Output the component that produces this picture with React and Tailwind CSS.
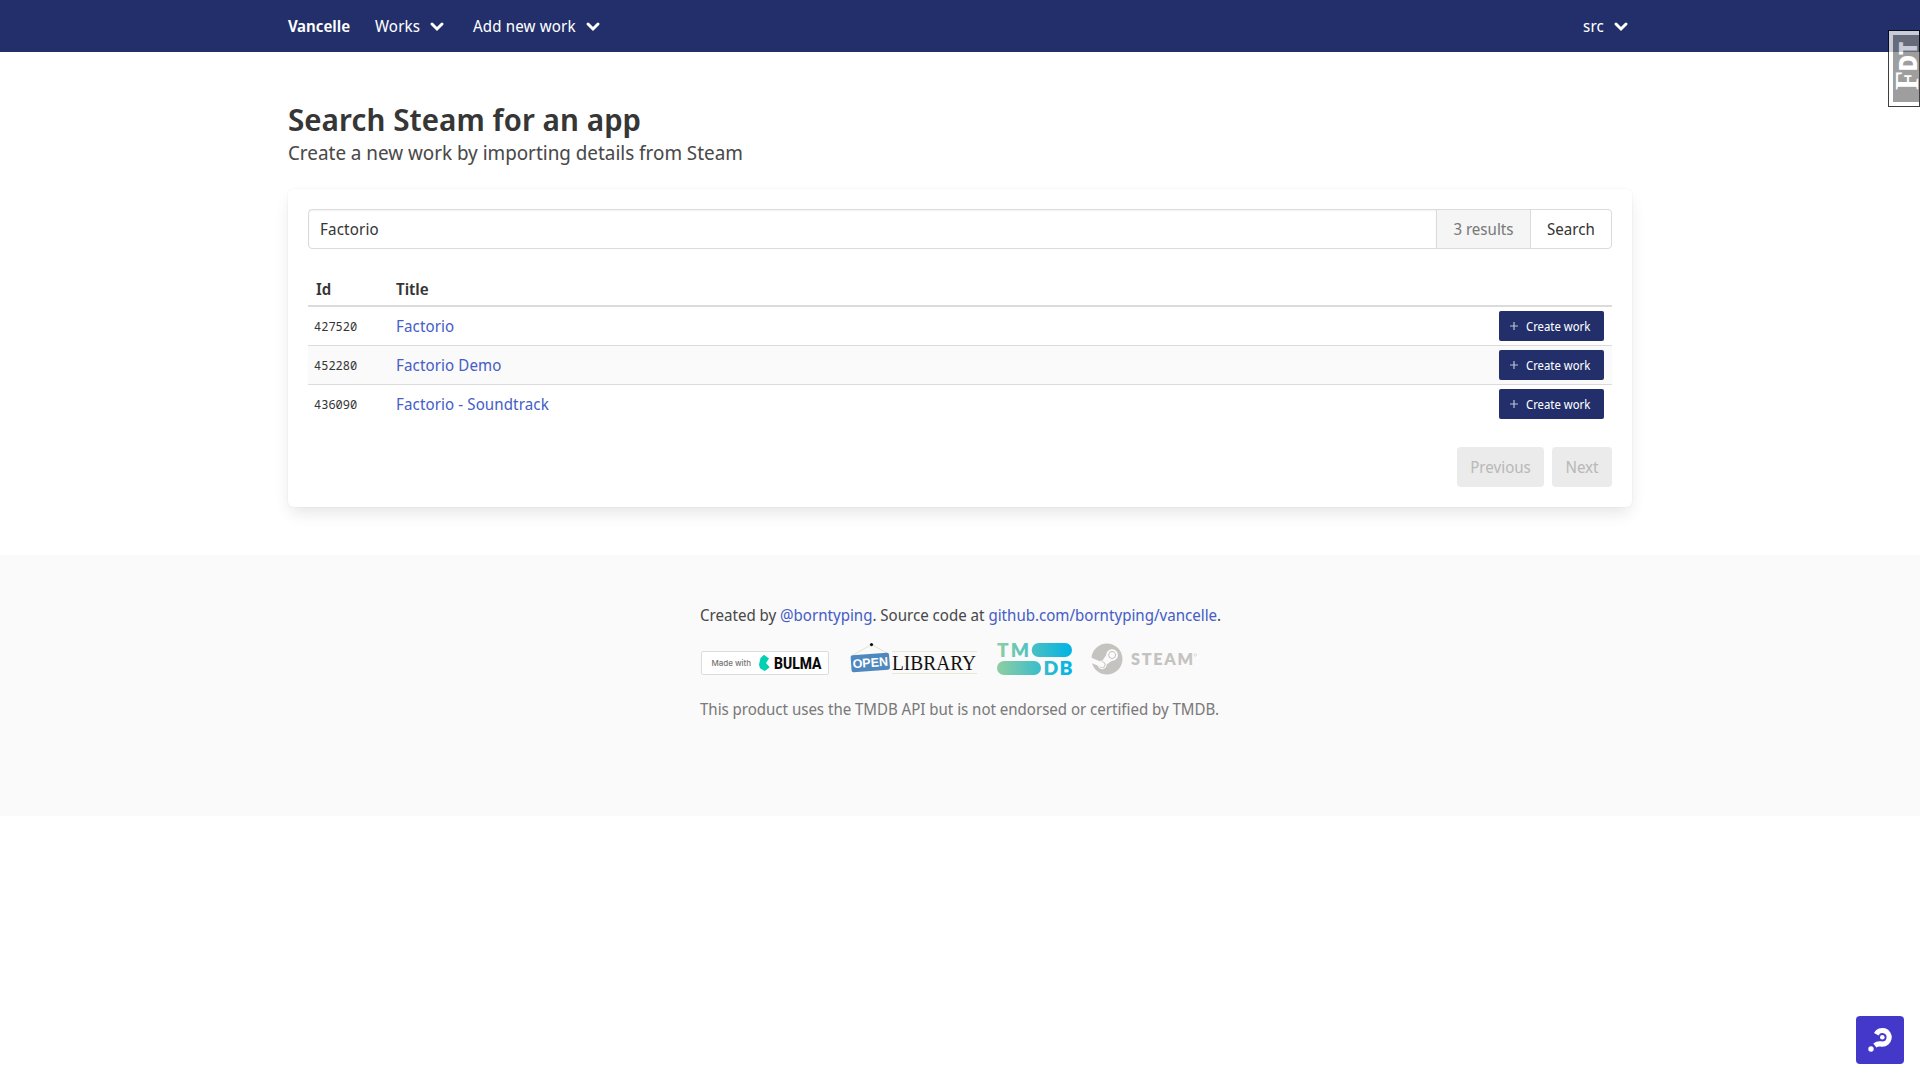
import { FaSteam } from "react-icons/fa";

const rows = [
  { id: "427520", title: "Factorio" },
  { id: "452280", title: "Factorio Demo" },
  { id: "436090", title: "Factorio - Soundtrack" },
];

function NavLink({ children }) {
  return (
    <a className="flex h-full items-center pr-[14px] pl-3 whitespace-nowrap">
      <span className="tracking-[0.01em]">{children}</span>
      <svg className="ml-[9px]" width="16" height="16" viewBox="0 0 16 16" fill="none">
        <path d="M3 6 8 11 13 6" stroke="#fff" strokeWidth="3" strokeLinecap="round" strokeLinejoin="miter" />
      </svg>
    </a>
  );
}

function Navbar() {
  return (
    <nav className="h-[52px] bg-[#222f6b] text-white">
      <div className="mx-auto flex h-full w-[1344px] items-center">
        <a className="w-[75px] font-semibold">Vancelle</a>
        <div className="h-full w-[98px]">
          <NavLink>Works</NavLink>
        </div>
        <NavLink>Add new work</NavLink>
        <div className="-mr-[11px] ml-auto h-full">
          <NavLink>src</NavLink>
        </div>
      </div>
    </nav>
  );
}

function SearchField() {
  return (
    <div className="flex h-10 rounded border border-[#dbdbdb] bg-white">
      <div className="flex flex-1 items-center pl-[11px] tracking-[0.01em] text-[#363636] shadow-[inset_0_1px_2px_rgba(10,10,10,0.05)]">
        Factorio
      </div>
      <div className="flex w-[95px] items-center justify-center border-x border-[#dbdbdb] bg-[#f5f5f5] text-[#7a7a7a]">
        3 results
      </div>
      <div className="flex w-[80px] items-center justify-center text-[#363636]">Search</div>
    </div>
  );
}

function CreateButton() {
  return (
    <button className="flex h-[30px] w-[105px] items-center rounded-[2px] bg-[#222f6b] pl-[10px] text-xs text-white">
      <svg className="opacity-70" width="10" height="10" viewBox="0 0 10 10">
        <path d="M5 1v8M1 5h8" stroke="#fff" strokeWidth="1.2" />
      </svg>
      <span className="mt-px ml-[7px]">Create work</span>
    </button>
  );
}

function Results() {
  return (
    <div className="mt-[18px] text-[#363636]">
      <div className="flex h-10 border-b-2 border-[#dbdbdb] leading-6 font-semibold">
        <div className="w-20 px-2 pt-[10px]">Id</div>
        <div className="pt-[10px] pl-2">Title</div>
      </div>
      {rows.map((r) => (
        <div
          key={r.id}
          className="flex h-[39px] items-center border-b border-[#dbdbdb] pr-2 last:h-[38px] last:border-b-0 nth-[3]:bg-[#fafafa]"
        >
          <div className="mt-px w-20 pl-[6px] font-['Noto_Sans_Mono','DejaVu_Sans_Mono',monospace] text-xs">{r.id}</div>
          <div className="flex-1 pl-2 tracking-[0.006em] text-[#485fc7]">{r.title}</div>
          <CreateButton />
        </div>
      ))}
    </div>
  );
}

function BulmaBadge() {
  return (
    <svg className="overflow-visible" width="130" height="32" viewBox="0 0 130 32">
      <rect x="1.5" y="8.5" width="127" height="23" rx="1.5" fill="#fff" stroke="#dcdcdc" />
      <text x="11.5" y="23" fontFamily="Inter, sans-serif" fontSize="8" fontWeight="500" fill="#757575" textLength="39.5">
        Made with
      </text>
      <path d="M59 21.5 60.5 15 64 11.8 69 15.5 66 20 69.7 24.2 64.8 28 60 25.3Z" fill="#00d1b2" />
      <text x="74" y="26" fontFamily="Roboto, sans-serif" fontSize="16.4" fontWeight="800" fill="#0a0a0a" textLength="47.5" lengthAdjust="spacingAndGlyphs">
        BULMA
      </text>
    </svg>
  );
}

function OpenLibraryLogo() {
  return (
    <svg className="overflow-visible" width="128" height="32" viewBox="0 0 128 32">
      <path d="M3 12 21.5 1.5 37 10" fill="none" stroke="#e3dfc9" strokeWidth="0.9" />
      <path d="M42 8.5h85M42 30.5h85" stroke="#e8e6d6" />
      <circle cx="21.5" cy="1.6" r="1.6" fill="#111" />
      <g transform="rotate(-4 20 19)">
        <rect x="1" y="11" width="38.5" height="17" rx="2" fill="#4f88be" />
        <text x="2.5" y="24" fontFamily="Liberation Sans, sans-serif" fontSize="12.5" fontWeight="700" fill="#fff" textLength="35.5" lengthAdjust="spacingAndGlyphs">
          OPEN
        </text>
      </g>
      <text x="42" y="26.5" fontFamily="Liberation Serif, serif" fontSize="21.5" fill="#111" textLength="84" lengthAdjust="spacingAndGlyphs">
        LIBRARY
      </text>
    </svg>
  );
}

function TmdbLogo() {
  return (
    <svg className="overflow-visible" width="75" height="32" viewBox="0 0 75 32">
      <defs>
        <linearGradient id="tmdb" gradientUnits="userSpaceOnUse" x1="0" y1="0" x2="75" y2="0">
          <stop offset="0" stopColor="#90cea1" />
          <stop offset="0.56" stopColor="#3cbec9" />
          <stop offset="1" stopColor="#00b3e5" />
        </linearGradient>
      </defs>
      <g fill="url(#tmdb)">
        <rect x="34.7" y="0" width="40.3" height="14" rx="7" />
        <rect x="0" y="18" width="44" height="14" rx="7" />
        <text x="0" y="14" fontFamily="Lato, sans-serif" fontSize="19" fontWeight="800" textLength="32">
          TM
        </text>
        <text x="46.5" y="32" fontFamily="Lato, sans-serif" fontSize="19.4" fontWeight="800" textLength="29">
          DB
        </text>
      </g>
    </svg>
  );
}

function SteamLogo() {
  return (
    <div className="flex h-8 items-center text-[#c5c3c0]">
      <FaSteam size={32} />
      <svg className="ml-2 overflow-visible" width="68" height="32" viewBox="0 0 68 32" fill="currentColor">
        <text x="0" y="22" fontFamily="Lato, sans-serif" fontSize="16.2" fontWeight="800" textLength="62">
          STEAM
        </text>
        <circle cx="64.3" cy="12" r="1.3" fill="none" stroke="currentColor" strokeWidth="0.5" />
      </svg>
    </div>
  );
}

function Footer() {
  return (
    <footer className="mt-12 flex h-[261px] flex-col items-center bg-[#fafafa] pt-12 leading-6 text-[#4a4a4a]">
      <div className="w-[520px] whitespace-nowrap">
        <p className="tracking-[-0.02px]">
          Created by <a className="text-[#485fc7]">@borntyping</a>. Source code at{" "}
          <a className="text-[#485fc7]">github.com/borntyping/vancelle</a>.
        </p>
        <div className="mt-4 flex h-8">
          <BulmaBadge />
          <div className="ml-5">
            <OpenLibraryLogo />
          </div>
          <div className="ml-[19px]">
            <TmdbLogo />
          </div>
          <div className="ml-[19px]">
            <SteamLogo />
          </div>
        </div>
        <p className="mt-[22px] tracking-[-0.04px] text-[#7a7a7a]">
          This product uses the TMDB API but is not endorsed or certified by TMDB.
        </p>
      </div>
    </footer>
  );
}

function DebugTab() {
  return (
    <div className="absolute top-[30px] right-0 h-[77px] w-8 border border-black bg-white pt-1 pl-1 opacity-75">
      <svg className="overflow-visible bg-[#7e7e7e]" width="26" height="67" viewBox="0 0 26 67" fill="#fff">
        <g transform="rotate(-90)">
          <text x="-55" y="25" fontFamily="Liberation Serif, serif" fontSize="34" fontWeight="700" textLength="19" lengthAdjust="spacingAndGlyphs">
            F
          </text>
          <text x="-36.5" y="24" fontFamily="Open Sans, sans-serif" fontSize="24.5" fontWeight="800" textLength="30" lengthAdjust="spacingAndGlyphs">
            DT
          </text>
        </g>
      </svg>
    </div>
  );
}

function HelpButton() {
  return (
    <button className="absolute right-4 bottom-4 h-12 w-12 rounded bg-[#4338ca]">
      <svg width="48" height="48" viewBox="0 0 48 48" fill="none">
        <path d="M20.3 18.2A6.8 6.8 0 1 1 26.3 28.1C24 28.1 22.500 26.800 18.800 29.500" stroke="#fff" strokeWidth="5.2" />
        <circle cx="26.3" cy="21.300" r="2.3" fill="#fff" />
        <circle cx="15" cy="33" r="2.7" fill="#fff" />
      </svg>
    </button>
  );
}

export default function App() {
  return (
    <div className="relative h-[1080px] w-full overflow-hidden bg-white font-['Noto_Sans_Display','Noto_Sans',sans-serif] text-base leading-6">
      <Navbar />
      <main className="mx-auto w-[1344px] pt-12">
        <h1 className="pt-0.5 text-[31px] leading-[34px] font-semibold tracking-[0.1px] text-[#363636]">
          Search Steam for an app
        </h1>
        <p className="mt-1 text-xl leading-[25px] tracking-[-0.02px] text-[#4a4a4a]">
          Create a new work by importing details from Steam
        </p>
        <section className="mt-6 h-[318px] rounded-md bg-white p-5 shadow-[0_8px_16px_-2px_rgba(10,10,10,0.1),0_0_0_1px_rgba(10,10,10,0.02)]">
          <SearchField />
          <Results />
          <div className="mt-6 flex justify-end gap-2 text-[#b9b9b9]">
            <button className="h-10 w-[87px] rounded bg-[#ebebeb]">Previous</button>
            <button className="h-10 w-[60px] rounded bg-[#ebebeb]">Next</button>
          </div>
        </section>
      </main>
      <Footer />
      <DebugTab />
      <HelpButton />
    </div>
  );
}
